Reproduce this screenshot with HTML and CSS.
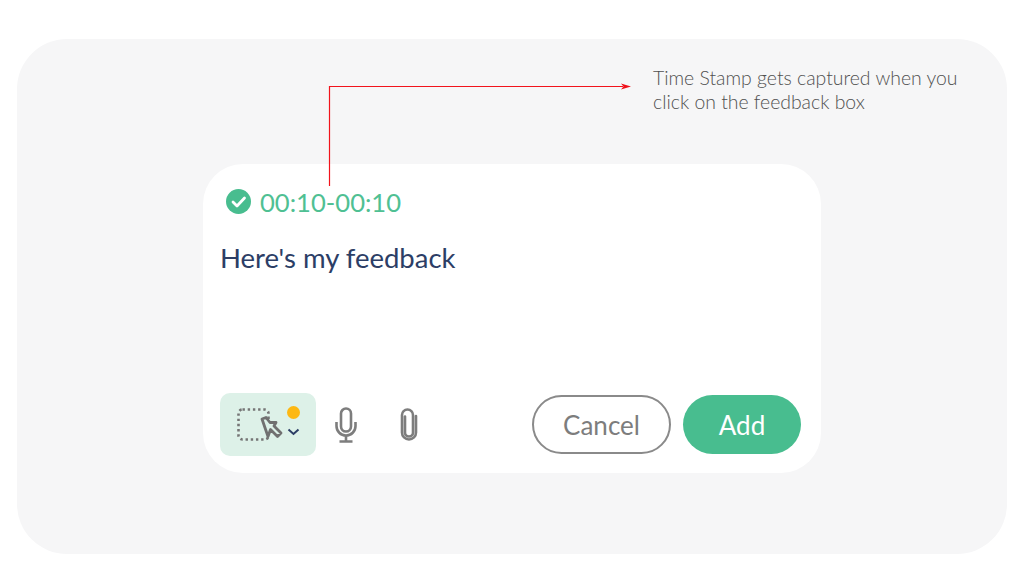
FILE: index.html
```html
<!DOCTYPE html>
<html lang="en">
<head>
  <meta charset="UTF-8">
  <meta name="viewport" content="width=device-width, initial-scale=1.0">
  <title>Feedback box</title>
  <link rel="stylesheet" href="styles.css">
</head>
<body>
  <div class="panel">
    <!-- Red connector from the time stamp to the note -->
    <svg class="connector" width="320" height="110" viewBox="0 0 320 110">
      <path d="M12.500 109V9.500H306" fill="none" stroke="#f2131c" stroke-width="1.200"/>
      <path d="M314 9.500L304 6.500L306.500 9.500L304 12.500Z" fill="#f0101a"/>
    </svg>

    <p class="note">Time Stamp gets captured when you<br>click on the feedback box</p>

    <div class="card">
      <div class="stamp">
        <svg class="check" width="25" height="25" viewBox="0 0 25 25">
          <circle cx="12.500" cy="12.500" r="12.500" fill="#48bd8f"/>
          <path d="M7 13l4 4l7.500-8" fill="none" stroke="#fff" stroke-width="2.800" stroke-linecap="round" stroke-linejoin="round"/>
        </svg>
        <span>00:10-00:10</span>
      </div>

      <p class="feedback">Here's my feedback</p>

      <div class="toolbar">
        <div class="tool-capture">
          <svg width="46" height="34" viewBox="0 0 46 34">
            <rect x="1.500" y="2.500" width="30" height="30" rx="4" fill="none" stroke="#757575" stroke-width="2.600" stroke-dasharray="2.400 2.800"/>
            <path d="M25 12L29 10.500L33 15.500L39 15.500L37 19L44 26L40.500 29.500L33.500 22.500L31 29.500Z" fill="#ddf1e8" stroke="#707070" stroke-width="2.800" stroke-linejoin="round"/>
          </svg>
          <div class="capture-side">
            <span class="dot"></span>
            <svg width="13" height="8" viewBox="0 0 13 8">
              <path d="M1.500 1.500L6.500 6L11.500 1.500" fill="none" stroke="#2c3e66" stroke-width="2"/>
            </svg>
          </div>
        </div>

        <svg class="tool-mic" width="22" height="36" viewBox="0 0 22 36">
          <rect x="6" y="1.500" width="10" height="23" rx="5" fill="none" stroke="#7d7d7d" stroke-width="2.600"/>
          <path d="M1.500 15v4a9.500 9.500 0 0 0 19 0v-4M11 28.500V34M4.500 34.500H17.500" fill="none" stroke="#7d7d7d" stroke-width="2.600"/>
        </svg>

        <svg class="tool-clip" width="22" height="34" viewBox="0 0 22 34">
          <path d="M7 8.500V24.500a4 4 0 0 0 8 0V7a5 5 0 0 0 -11 0V24.500a7 7 0 0 0 14 0V8" fill="none" stroke="#7d7d7d" stroke-width="2.600" stroke-linecap="round"/>
        </svg>

        <button class="btn-cancel">Cancel</button>
        <button class="btn-add">Add</button>
      </div>
    </div>
  </div>
</body>
</html>
```

FILE: styles.css
```css
/* General Styles */
body {
  font-family: 'Lato', sans-serif;
  background-color: #ffffff;
  margin: 0;
  padding: 0;
}

.panel {
  position: relative;
  height: 515px;
  margin: 39px 17px 0;
  padding: 27px 49px 0 186px;
  box-sizing: border-box;
  background-color: #f6f6f7;
  border-radius: 50px;
}

.connector {
  position: absolute;
  left: 300px;
  top: 38px;
}

.note {
  margin: 0 0 0 450px;
  height: 98px;
  font-size: 19.4px;
  font-weight: 300;
  line-height: 24px;
  color: #505050;
  white-space: nowrap;
}

/* Feedback card */
.card {
  width: 618px;
  height: 309px;
  padding: 21px 20px 17px 17px;
  box-sizing: border-box;
  display: flex;
  flex-direction: column;
  background-color: #ffffff;
  border-radius: 40px;
}

.stamp {
  display: flex;
  align-items: center;
  gap: 9px;
  padding-left: 6px;
  height: 33px;
  font-size: 25.6px;
  color: #4fc093;
}

.feedback {
  margin: 23px 0 0;
  font-size: 27.5px;
  line-height: 34px;
  color: #2c3e66;
}

/* Toolbar */
.toolbar {
  margin-top: auto;
  display: flex;
  align-items: center;
}

.tool-capture {
  width: 96px;
  height: 63px;
  padding: 14px 0 0 17px;
  box-sizing: border-box;
  display: flex;
  gap: 4px;
  background-color: #ddf1e8;
  border-radius: 10px;
}

.capture-side {
  display: flex;
  flex-direction: column;
  align-items: center;
  gap: 9px;
  margin-top: -1px;
}

.dot {
  width: 13px;
  height: 13px;
  border-radius: 50%;
  background-color: #fdb813;
}

.tool-mic {
  margin-left: 19px;
}

.tool-clip {
  margin-left: 41px;
}

.btn-cancel,
.btn-add {
  height: 59px;
  font-family: inherit;
  font-size: 26px;
  border-radius: 30px;
  box-sizing: border-box;
}

.btn-cancel {
  width: 139px;
  margin-left: auto;
  background-color: #ffffff;
  border: 2px solid #8a8a8a;
  color: #7d7d7d;
}

.btn-add {
  width: 118px;
  margin-left: 12px;
  background-color: #48bd8f;
  border: none;
  color: #ffffff;
}
```
